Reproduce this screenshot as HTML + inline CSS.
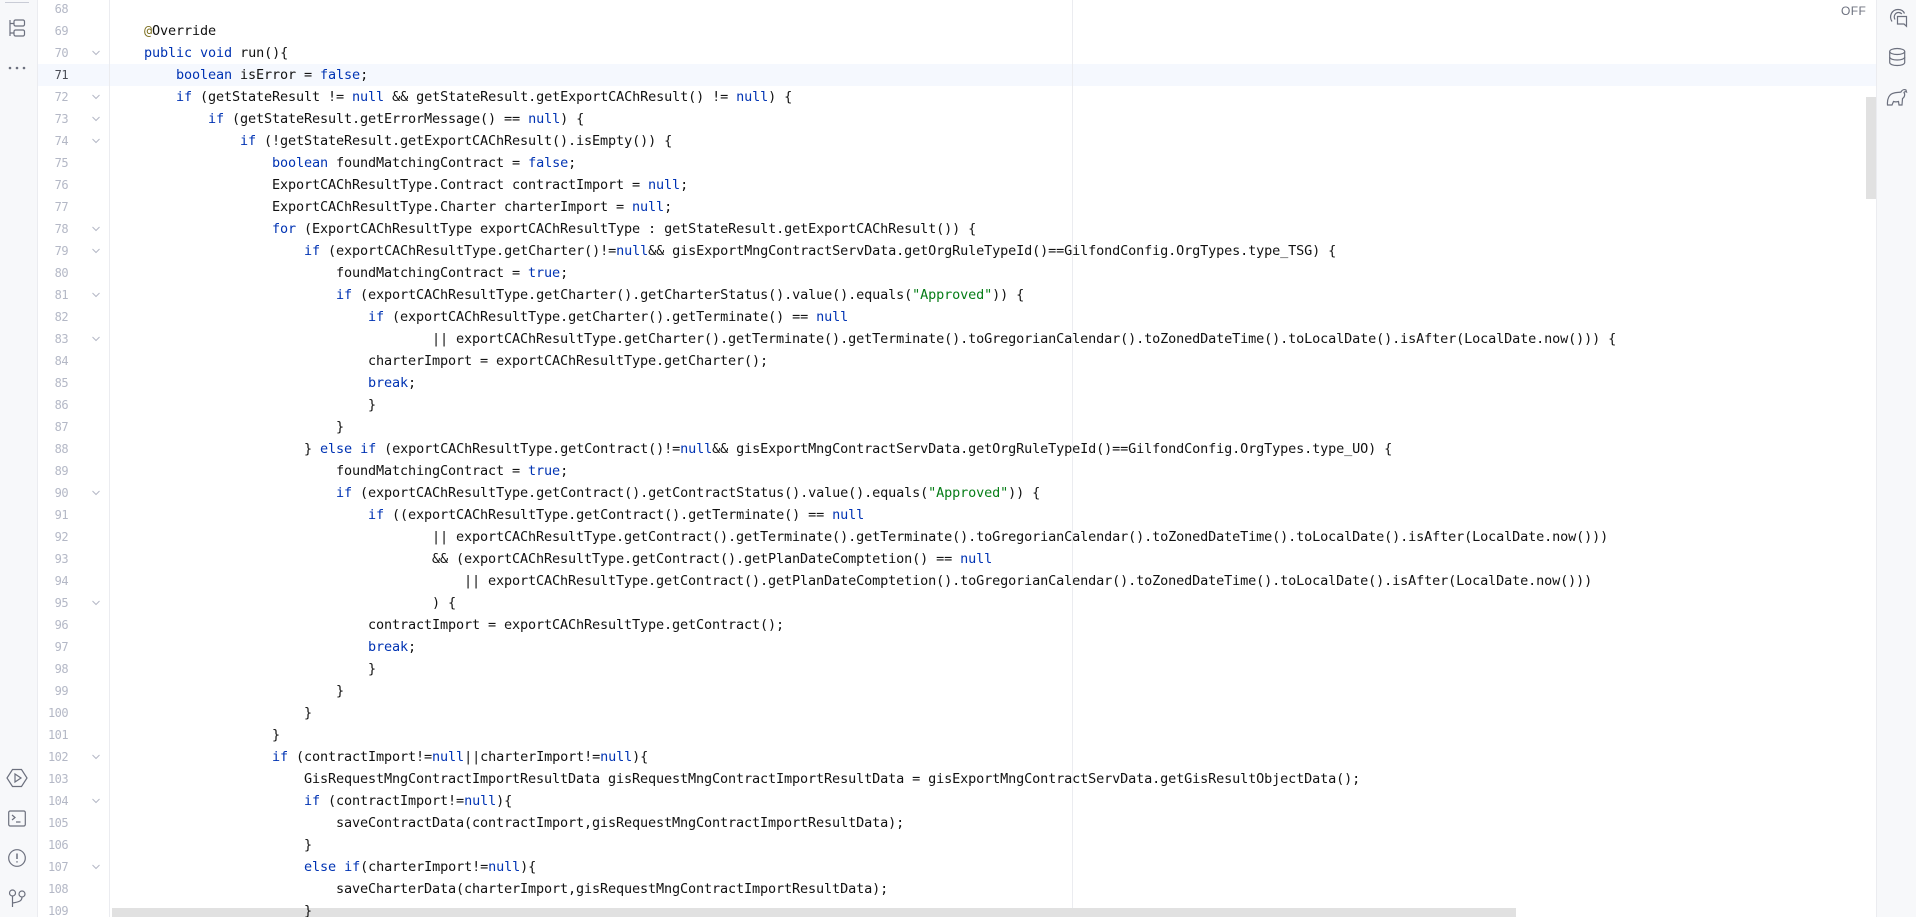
<!DOCTYPE html>
<html><head><meta charset="utf-8"><title>Editor</title>
<style>
html,body{margin:0;padding:0;background:#fff;width:1916px;height:917px;overflow:hidden}
body{position:relative;font-family:"DejaVu Sans Mono","Liberation Mono",monospace}
.abs{position:absolute}
#ls{left:0;top:0;width:37px;height:917px;background:#F7F8FA;border-right:1px solid #EBECF0}
#rs{left:1876px;top:0;width:39px;height:917px;background:#F7F8FA;border-left:1px solid #EBECF0}
#gl{left:109px;top:0;width:1px;height:917px;background:#EBECF0}
#cur{left:38px;top:64px;width:1838px;height:22px;background:#F5F8FE}
#mar{left:1072px;top:0;width:1px;height:917px;background:#EBECF0}
#vs{left:1866px;top:97px;width:10px;height:102px;background:#E1E1E1}
#hs{left:112px;top:908px;width:1404px;height:9px;background:#E1E1E1}
#nums{left:38px;top:-2px;width:30px;text-align:right;font-size:12px;line-height:22px;color:#B4B8C6;letter-spacing:-.55px}
#nums div{height:22px}
#code{left:112px;top:-2px;font-size:13.5px;letter-spacing:-.127px;line-height:22px;color:#111}
#code div{height:22px;white-space:pre}
b{font-weight:normal;color:#0033B3}
i{font-style:normal;color:#067D17}
u{text-decoration:none;color:#7d6f20}
#off{left:1841px;top:4px;font-family:"Liberation Sans",sans-serif;font-size:12px;line-height:14px;color:#6C707E;letter-spacing:.4px}
svg{position:absolute;overflow:visible}
svg.ic *{fill:none;stroke:#6C707E;stroke-width:1.2}
</style></head><body>
<div class="abs" id="ls"></div>
<div class="abs" id="rs"></div>
<div class="abs" id="cur"></div>
<div class="abs" id="gl"></div>
<div class="abs" id="mar"></div>
<div class="abs" id="vs"></div>
<div class="abs" id="hs"></div>
<div class="abs" style="left:5px;top:2px;width:24px;height:1px;background:#C9CCD6"></div>

<svg class="ic" style="left:0;top:0" width="38" height="917" viewBox="0 0 38 917">
<path d="M10 20v16M10 23.500h3.500M10 33h3.500"/>
<rect x="14" y="20" width="10.500" height="6" rx="1.500"/>
<rect x="14" y="30" width="10.500" height="6" rx="1.500"/>
<path d="M12.500 769.500h9l5.500 8.500-5.500 8.500h-9l-5.500-8.500z"/>
<path d="M15 774v8l6-4z"/>
<rect x="8.700" y="811" width="16.600" height="15" rx="1.500"/>
<path d="M12 815l3 2.500-3 2.500M16 822h4.500"/>
<circle cx="17" cy="858" r="8.300"/>
<path d="M17 853.500v5.500M17 861.300v1.200" style="stroke-width:1.500"/>
<circle cx="12.500" cy="893" r="3"/>
<circle cx="22" cy="894" r="3"/>
<path d="M12.500 896v11M22 897c0 4-3 5-9.500 6"/>
</svg>
<svg class="abs" style="left:0;top:0" width="38" height="80"><circle cx="10" cy="68" r="1.300" fill="#6C707E"/><circle cx="17" cy="68" r="1.300" fill="#6C707E"/><circle cx="24" cy="68" r="1.300" fill="#6C707E"/></svg>

<svg class="ic" style="left:1876px;top:0" width="40" height="110" viewBox="1876 0 40 110">
<path d="M1892 21.500c-3.500-5.500 0-12 6-12 3 0 5.500 1.500 6.500 4"/>
<path d="M1895 19.500c-2-3.500.5-7 3.500-7 1.500 0 2.500.5 3.300 1.500"/>
<path d="M1897.500 16.500h9v9.800l-2.500-2.300h-6.500z"/>
<ellipse cx="1897.200" cy="51.500" rx="7.500" ry="3"/>
<path d="M1889.700 51.500v11c0 1.700 3.300 3 7.500 3s7.500-1.300 7.500-3v-11"/>
<path d="M1889.700 57c0 1.700 3.300 3 7.500 3s7.500-1.300 7.500-3"/>
<path d="M1887.500 105C1887 99 1889 94 1894 93c3-.7 5-.5 7-1 1-2 3-3 5-2l.500 2c-1-.5-2-.5-2.500.5 1 1.500 1 4.500-1.500 6l-.5 6.500h-3l-.5-3.500c-2 .5-3.500.5-5 0l-1.500 3.500z"/>
</svg>

<div class="abs" id="off">OFF</div>

<svg class="abs" style="left:90px;top:0" width="14" height="917" fill="none" stroke="#B4B8C6" stroke-width="1">
<path d="M2.500 51l3.500 3.500 3.500-3.500M2.500 95l3.500 3.500 3.500-3.500M2.500 117l3.500 3.500 3.500-3.500M2.500 139l3.500 3.500 3.500-3.500M2.500 227l3.500 3.500 3.500-3.500M2.500 249l3.500 3.500 3.500-3.500M2.500 293l3.500 3.500 3.500-3.500M2.500 337l3.500 3.500 3.500-3.500M2.500 491l3.500 3.500 3.500-3.500M2.500 601l3.500 3.500 3.500-3.500M2.500 755l3.500 3.500 3.500-3.500M2.500 799l3.500 3.500 3.500-3.500M2.500 865l3.500 3.500 3.500-3.500"/>
</svg>

<div class="abs" id="nums">
<div>68</div><div>69</div><div>70</div><div style="color:#4a4d57">71</div><div>72</div><div>73</div><div>74</div><div>75</div><div>76</div><div>77</div><div>78</div><div>79</div><div>80</div><div>81</div><div>82</div><div>83</div><div>84</div><div>85</div><div>86</div><div>87</div><div>88</div><div>89</div><div>90</div><div>91</div><div>92</div><div>93</div><div>94</div><div>95</div><div>96</div><div>97</div><div>98</div><div>99</div><div>100</div><div>101</div><div>102</div><div>103</div><div>104</div><div>105</div><div>106</div><div>107</div><div>108</div><div>109</div>
</div>

<div class="abs" id="code">
<div> </div>
<div>    <u>@</u>Override</div>
<div>    <b>public</b> <b>void</b> run(){</div>
<div>        <b>boolean</b> isError = <b>false</b>;</div>
<div>        <b>if</b> (getStateResult != <b>null</b> &amp;&amp; getStateResult.getExportCAChResult() != <b>null</b>) {</div>
<div>            <b>if</b> (getStateResult.getErrorMessage() == <b>null</b>) {</div>
<div>                <b>if</b> (!getStateResult.getExportCAChResult().isEmpty()) {</div>
<div>                    <b>boolean</b> foundMatchingContract = <b>false</b>;</div>
<div>                    ExportCAChResultType.Contract contractImport = <b>null</b>;</div>
<div>                    ExportCAChResultType.Charter charterImport = <b>null</b>;</div>
<div>                    <b>for</b> (ExportCAChResultType exportCAChResultType : getStateResult.getExportCAChResult()) {</div>
<div>                        <b>if</b> (exportCAChResultType.getCharter()!=<b>null</b>&amp;&amp; gisExportMngContractServData.getOrgRuleTypeId()==GilfondConfig.OrgTypes.type_TSG) {</div>
<div>                            foundMatchingContract = <b>true</b>;</div>
<div>                            <b>if</b> (exportCAChResultType.getCharter().getCharterStatus().value().equals(<i>"Approved"</i>)) {</div>
<div>                                <b>if</b> (exportCAChResultType.getCharter().getTerminate() == <b>null</b></div>
<div>                                        || exportCAChResultType.getCharter().getTerminate().getTerminate().toGregorianCalendar().toZonedDateTime().toLocalDate().isAfter(LocalDate.now())) {</div>
<div>                                charterImport = exportCAChResultType.getCharter();</div>
<div>                                <b>break</b>;</div>
<div>                                }</div>
<div>                            }</div>
<div>                        } <b>else</b> <b>if</b> (exportCAChResultType.getContract()!=<b>null</b>&amp;&amp; gisExportMngContractServData.getOrgRuleTypeId()==GilfondConfig.OrgTypes.type_UO) {</div>
<div>                            foundMatchingContract = <b>true</b>;</div>
<div>                            <b>if</b> (exportCAChResultType.getContract().getContractStatus().value().equals(<i>"Approved"</i>)) {</div>
<div>                                <b>if</b> ((exportCAChResultType.getContract().getTerminate() == <b>null</b></div>
<div>                                        || exportCAChResultType.getContract().getTerminate().getTerminate().toGregorianCalendar().toZonedDateTime().toLocalDate().isAfter(LocalDate.now()))</div>
<div>                                        &amp;&amp; (exportCAChResultType.getContract().getPlanDateComptetion() == <b>null</b></div>
<div>                                            || exportCAChResultType.getContract().getPlanDateComptetion().toGregorianCalendar().toZonedDateTime().toLocalDate().isAfter(LocalDate.now()))</div>
<div>                                        ) {</div>
<div>                                contractImport = exportCAChResultType.getContract();</div>
<div>                                <b>break</b>;</div>
<div>                                }</div>
<div>                            }</div>
<div>                        }</div>
<div>                    }</div>
<div>                    <b>if</b> (contractImport!=<b>null</b>||charterImport!=<b>null</b>){</div>
<div>                        GisRequestMngContractImportResultData gisRequestMngContractImportResultData = gisExportMngContractServData.getGisResultObjectData();</div>
<div>                        <b>if</b> (contractImport!=<b>null</b>){</div>
<div>                            saveContractData(contractImport,gisRequestMngContractImportResultData);</div>
<div>                        }</div>
<div>                        <b>else</b> <b>if</b>(charterImport!=<b>null</b>){</div>
<div>                            saveCharterData(charterImport,gisRequestMngContractImportResultData);</div>
<div>                        }</div>
</div>
</body></html>
